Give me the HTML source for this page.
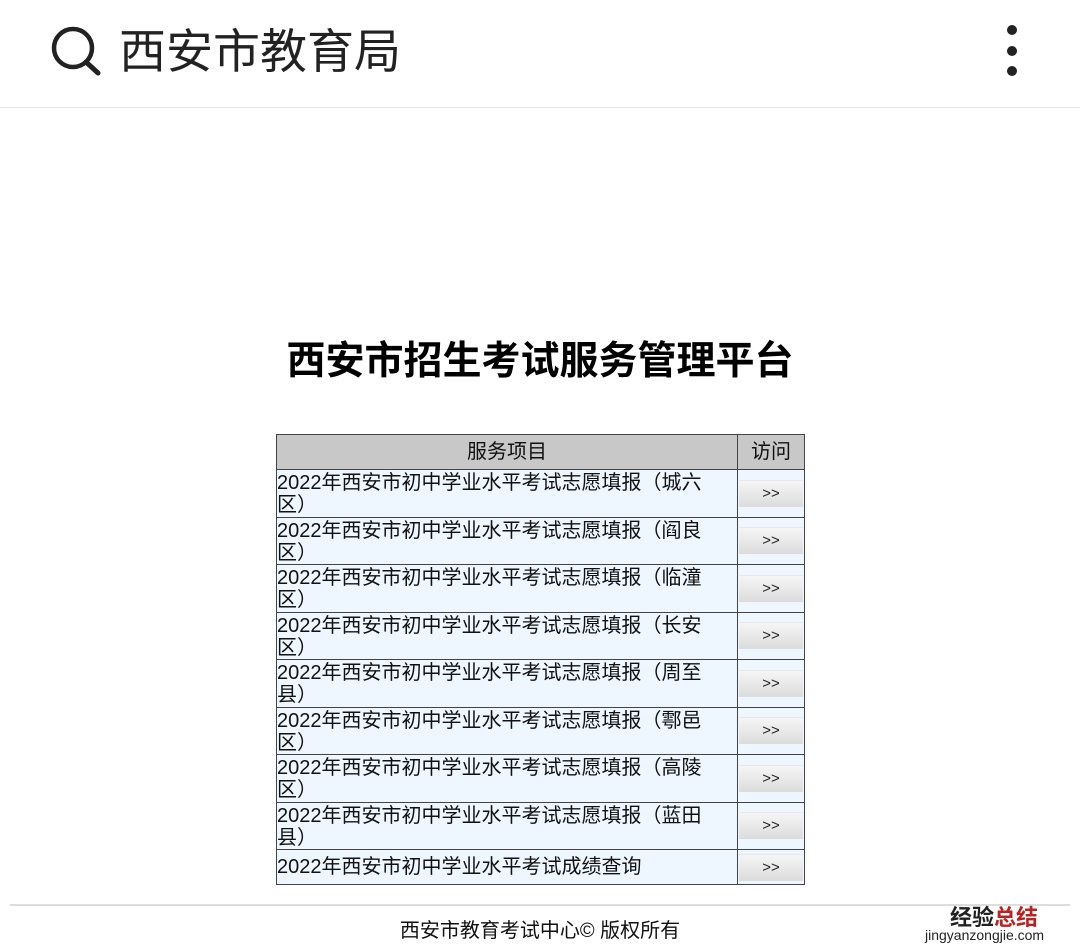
<!DOCTYPE html>
<html><head><meta charset="utf-8"><style>
body{margin:0;width:1080px;height:952px;background:#fff;font-family:"Liberation Sans","Noto Sans CJK SC",sans-serif;position:relative;overflow:hidden}
.top{position:absolute;left:0;top:0;width:1080px;height:107px;border-bottom:1px solid #e6e6e6}
.ttl{position:absolute;left:119px;top:21px;font-size:47px;color:#222;line-height:62px}
.dot{position:absolute;left:1007px;width:10px;height:10px;border-radius:5px;background:#222}
h1{position:absolute;left:0;width:1080px;top:335px;margin:0;text-align:center;font-size:39px;font-weight:bold;line-height:54px;color:#000}
table{position:absolute;left:276px;top:434px;border-collapse:collapse;width:529px}
td,th{border:1px solid #444;font-size:20px;color:#111;padding:0;line-height:22px}
th{background:#c8c8c8;font-weight:normal;height:34px}
td.t{background:#eef6ff;text-align:left;vertical-align:top;padding-top:2px;height:44.5px}
td.b{background:#eef6ff;width:66px;text-align:center}
.btn{margin:0 1px;height:26px;background:linear-gradient(#f6f6f6,#dcdcdc);border-top:1px solid #e8e8e8;font-size:15px;line-height:26px;color:#222}
.foot{position:absolute;left:10px;top:904px;width:1060px;border-top:2px solid #ddd}
.ft{position:absolute;left:0;width:1080px;top:914px;text-align:center;font-size:20px;color:#111}
</style></head><body>
<div class="top">
<svg style="position:absolute;left:50px;top:26px" width="52" height="50" viewBox="0 0 52 50"><circle cx="23" cy="22" r="19" fill="none" stroke="#222" stroke-width="4.5"/><line x1="36" y1="36" x2="48" y2="47" stroke="#222" stroke-width="5" stroke-linecap="round"/></svg>
<div class="ttl">西安市教育局</div>
<div class="dot" style="top:25px"></div><div class="dot" style="top:46px"></div><div class="dot" style="top:66px"></div>
</div>
<h1>西安市招生考试服务管理平台</h1>
<table>
<tr><th>服务项目</th><th>访问</th></tr>
<tr><td class="t">2022年西安市初中学业水平考试志愿填报（城六<br>区）</td><td class="b"><div class="btn">&gt;&gt;</div></td></tr>
<tr><td class="t">2022年西安市初中学业水平考试志愿填报（阎良<br>区）</td><td class="b"><div class="btn">&gt;&gt;</div></td></tr>
<tr><td class="t">2022年西安市初中学业水平考试志愿填报（临潼<br>区）</td><td class="b"><div class="btn">&gt;&gt;</div></td></tr>
<tr><td class="t">2022年西安市初中学业水平考试志愿填报（长安<br>区）</td><td class="b"><div class="btn">&gt;&gt;</div></td></tr>
<tr><td class="t">2022年西安市初中学业水平考试志愿填报（周至<br>县）</td><td class="b"><div class="btn">&gt;&gt;</div></td></tr>
<tr><td class="t">2022年西安市初中学业水平考试志愿填报（鄠邑<br>区）</td><td class="b"><div class="btn">&gt;&gt;</div></td></tr>
<tr><td class="t">2022年西安市初中学业水平考试志愿填报（高陵<br>区）</td><td class="b"><div class="btn">&gt;&gt;</div></td></tr>
<tr><td class="t">2022年西安市初中学业水平考试志愿填报（蓝田<br>县）</td><td class="b"><div class="btn">&gt;&gt;</div></td></tr>
<tr><td class="t" style="height:34px;vertical-align:middle;padding-top:0">2022年西安市初中学业水平考试成绩查询</td><td class="b"><div class="btn">&gt;&gt;</div></td></tr>
</table>
<div class="foot"></div>
<div class="ft">西安市教育考试中心© 版权所有</div>
<div style="position:absolute;left:950px;top:900px;font-size:22px;font-weight:bold;color:#222">经验<span style="color:#b22">总结</span></div>
<div style="position:absolute;left:925px;top:927px;font-size:14px;color:#222">jingyanzongjie.com</div>
</body></html>
